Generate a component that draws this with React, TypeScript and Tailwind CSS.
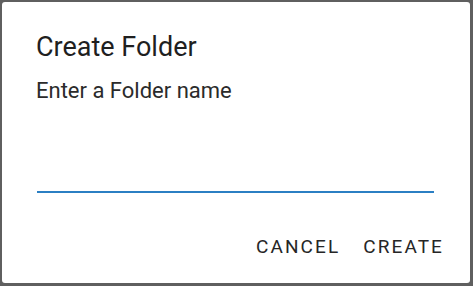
import React from 'react';

export default function App() {
  return (
    <div className="w-[473px] h-[286px] bg-[#5f5f5f] p-[2px] pb-[3px] pr-[3px]" style={{ fontFamily: 'Roboto, "Noto Sans", sans-serif' }}>
      <div className="h-full bg-white rounded-[3px] flex flex-col pl-[34px] pr-[26px]">
        <h1 className="mt-[30px] text-[27px] leading-[30px] font-normal text-[#1f1f1f]">Create Folder</h1>
        <p className="mt-[16px] text-[22px] leading-[26px] text-[#2b2b2b]">Enter a Folder name</p>
        <div className="mt-[87px] ml-[1px] mr-[10px] h-[2px] bg-[#2b7fc3]" />
        <div className="mt-[43px] flex justify-end gap-[23px] text-[19px] leading-[22px] font-normal tracking-[0.11em] text-[#262626]">
          <button>CANCEL</button>
          <button>CREATE</button>
        </div>
      </div>
    </div>
  );
}
